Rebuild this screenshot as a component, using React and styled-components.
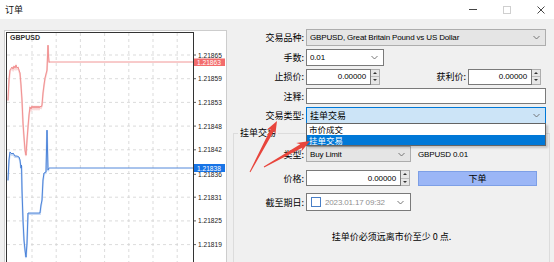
import React from 'react'
import styled, { createGlobalStyle } from 'styled-components'

const GlobalStyle = createGlobalStyle`
  html, body { margin: 0; padding: 0; background: #f0f0f0; }
  body { font-family: "Liberation Sans", "Noto Sans CJK SC", sans-serif; }
  * { box-sizing: border-box; }
`

const cjk = `"Noto Sans CJK SC", "Liberation Sans", sans-serif`

const Window = styled.div`
  position: relative;
  width: 554px;
  height: 262px;
  overflow: hidden;
  background: #f0f0f0;
  display: flex;
  flex-direction: column;
`

const TitleBar = styled.div`
  height: 19px;
  flex-shrink: 0;
  background: #fff;
  display: flex;
  align-items: center;
  padding-left: 5px;
`

const Title = styled.span`
  flex: 1;
  font-family: ${cjk};
  font-size: 9px;
  color: #111;
`

const Caption = styled.div`
  display: flex;
  height: 100%;
  margin-right: -4px;
`

const CaptionButton = styled.div`
  width: 34px;
  display: flex;
  align-items: center;
  justify-content: center;
`

const MinGlyph = styled.span`
  width: 8px;
  height: 1px;
  background: #444;
`

const MaxGlyph = styled.span`
  width: 8px;
  height: 8px;
  border: 1px solid #cfcfcf;
`

const Body = styled.div`
  flex: 1;
  display: flex;
  align-items: flex-start;
`

const ChartFrame = styled.div`
  margin: 11px 0 0 4px;
  width: 223px;
  height: 232px;
  flex-shrink: 0;
  svg { display: block; }
`

const Form = styled.div`
  margin-left: 6px;
  width: 317px;
  display: flex;
  flex-direction: column;
  padding-top: 10px;
`

const TopGrid = styled.div`
  display: grid;
  grid-template-columns: 73px 240px;
  grid-auto-rows: 17px;
  row-gap: 2.5px;
  align-items: center;
`

const Label = styled.div`
  text-align: right;
  padding-right: 2px;
  font-family: ${cjk};
  font-size: 9px;
  color: #000;
  white-space: nowrap;
`

const Field = styled.div`
  display: flex;
  align-items: center;
  height: 100%;
`

const comboColors = {
  disabled: { bg: '#e5e5e5', border: '#adadad' },
  plain: { bg: '#ffffff', border: '#7a7a7a' },
  focus: { bg: '#cce4f7', border: '#0078d7' },
}

const Combo = styled.div`
  position: relative;
  width: ${(p) => p.$w}px;
  height: ${(p) => p.$h || 17}px;
  display: flex;
  align-items: center;
  padding: 0 5px 0 3px;
  background: ${(p) => comboColors[p.$variant].bg};
  border: 1px solid ${(p) => comboColors[p.$variant].border};
  font-size: ${(p) => (p.$cjk ? 9 : 8)}px;
  font-family: ${(p) => (p.$cjk ? cjk : `"Liberation Sans", sans-serif`)};
  letter-spacing: ${(p) => (p.$cjk ? 0 : -0.15)}px;
  color: #000;
  white-space: nowrap;
`

const ComboText = styled.span`
  flex: 1;
  overflow: hidden;
`

const Chevron = () => (
  <svg width="7" height="5" viewBox="0 0 7 5">
    <polyline points="0.5,1 3.5,4 6.5,1" fill="none" stroke="#6a6a6a" strokeWidth="0.9" />
  </svg>
)

const DropList = styled.div`
  position: absolute;
  top: 100%;
  left: -1px;
  right: -1px;
  z-index: 2;
  background: #fff;
  border: 1px solid #646464;
  box-shadow: 2px 2px 2px rgba(0, 0, 0, 0.18);
`

const DropItem = styled.div`
  height: 10.5px;
  line-height: 10.5px;
  padding-left: 2px;
  font-family: ${cjk};
  font-size: 8.5px;
  background: ${(p) => (p.$active ? '#0078d7' : '#fff')};
  color: ${(p) => (p.$active ? '#fff' : '#000')};
`

const SpinWrap = styled.div`
  display: flex;
  width: ${(p) => p.$w}px;
  height: 16px;
`

const InputBox = styled.div`
  flex: 1;
  height: 100%;
  background: #fff;
  border: 1px solid #7a7a7a;
  display: flex;
  align-items: center;
  justify-content: flex-end;
  padding-right: 4px;
  font-size: 8px;
  letter-spacing: -0.1px;
  color: #000;
`

const Spinner = styled.div`
  width: 9px;
  display: flex;
  flex-direction: column;
  border: 1px solid #adadad;
  border-left: none;
  background: #e6e6e6;
`

const SpinHalf = styled.div`
  flex: 1;
  display: flex;
  align-items: center;
  justify-content: center;
  & + & { border-top: 1px solid #bdbdbd; }
  &::after {
    content: '';
    border-left: 2px solid transparent;
    border-right: 2px solid transparent;
    ${(p) => (p.$up ? 'border-bottom: 2px solid #333;' : 'border-top: 2px solid #333;')}
  }
`

const SpinInput = ({ w, value }) => (
  <SpinWrap $w={w}>
    <InputBox>{value}</InputBox>
    <Spinner>
      <SpinHalf $up />
      <SpinHalf />
    </Spinner>
  </SpinWrap>
)

const InlineLabel = styled(Label)`
  flex: 1;
`

const Filler = styled.span`
  width: 5px;
`

const TextBox = styled.div`
  width: 240px;
  height: 16px;
  background: #fff;
  border: 1px solid #7a7a7a;
`

const Group = styled.fieldset`
  margin: 3px 0 0 0;
  padding: 6px 0 0 0;
  border: 1px solid #dcdcdc;
  min-width: 0;
  min-height: 150px;
`

const Legend = styled.legend`
  margin-left: 4px;
  padding: 0 2px;
  font-family: ${cjk};
  font-size: 9px;
  line-height: 12px;
  color: #000;
`

const GroupGrid = styled.div`
  display: grid;
  grid-template-columns: 72px auto;
  grid-auto-rows: 18px;
  row-gap: 6px;
  align-items: center;
`

const Note = styled.span`
  margin-left: 7px;
  font-size: 8px;
  letter-spacing: -0.15px;
  color: #000;
`

const OrderButton = styled.div`
  margin-left: 8px;
  width: 119px;
  height: 15px;
  display: flex;
  align-items: center;
  justify-content: center;
  background: #9bb6f6;
  border: 1px solid #7d9fe6;
  font-family: ${cjk};
  font-size: 9px;
  color: #000;
`

const DateBox = styled.div`
  width: 105px;
  height: 18px;
  display: flex;
  align-items: center;
  padding: 0 6px 0 4px;
  background: #fff;
  border: 1px solid #7a7a7a;
`

const Check = styled.span`
  width: 10px;
  height: 10px;
  flex-shrink: 0;
  border: 1px solid #4a7fc6;
  background: #fff;
`

const DateText = styled.span`
  width: 64px;
  margin: 0 auto 0 4px;
  overflow: hidden;
  white-space: nowrap;
  font-size: 8px;
  letter-spacing: -0.15px;
  color: #8f8f8f;
`

const Message = styled.div`
  margin-top: 20px;
  text-align: center;
  font-family: ${cjk};
  font-size: 9px;
  line-height: 12px;
  color: #000;
`

const Annotations = styled.svg`
  position: absolute;
  left: 0;
  top: 0;
  pointer-events: none;
  z-index: 3;
`

const levels = ['1.21865', '1.21859', '1.21853', '1.21848', '1.21842', '1.21836', '1.21831', '1.21825', '1.21819']

const redPath = [
  [8, 100], [9, 80], [10, 70], [12, 67], [13, 69], [14, 66], [15, 68], [16, 65], [17, 68], [18, 67],
  [20, 73], [21, 85], [22, 100], [23, 123], [24, 137], [25, 150], [26, 155], [27, 140], [28, 127],
  [29, 115], [30, 107], [31, 109], [32, 106], [33, 108], [34, 106], [35, 108], [36, 106], [37, 108],
  [38, 106], [39, 108], [40, 106], [41, 107], [42, 105], [43, 93], [44, 85], [45, 78], [46, 74],
  [47, 70], [48, 45], [48.5, 56], [49, 62], [193, 62],
]

const bluePath = [
  [8, 180], [9, 160], [10, 152], [12, 154], [13, 153], [15, 156], [17, 156], [19, 157], [20, 160],
  [21, 168], [21.5, 165], [22, 190], [23, 220], [24, 240], [25, 250], [26, 257], [27, 243],
  [28, 213], [40, 213], [41, 205], [42, 200], [42.5, 190], [43, 180], [44, 173], [46, 172],
  [47, 130], [48, 170], [49, 168], [193, 168],
]

const pts = (arr, dy = 0) => arr.map(([x, y]) => `${x},${y + dy}`).join(' ')

const Chart = () => (
  <svg width="223" height="232" viewBox="4 30 223 232">
    <rect x="4.5" y="30.5" width="222" height="240" fill="#fff" stroke="#cdcdcd" />
    {levels.map((_, i) => (
      <line key={`h${i}`} x1="7" x2="193" y1={55 + i * 23.7} y2={55 + i * 23.7} stroke="#d2d2d2" strokeWidth="0.8" strokeDasharray="3 3" />
    ))}
    {[0, 1, 2, 3, 4, 5, 6].map((i) => (
      <line key={`v${i}`} x1={32 + i * 24.2} x2={32 + i * 24.2} y1="33" y2="262" stroke="#d2d2d2" strokeWidth="0.8" strokeDasharray="3 3" />
    ))}
    <polyline points={pts(redPath.slice(0, -1), 1)} fill="none" stroke="#f9d3d3" strokeWidth="1.8" />
    <polyline points={pts(redPath)} fill="none" stroke="#ef8a8a" strokeWidth="0.9" />
    <polyline points={pts(bluePath.slice(0, -1), 1)} fill="none" stroke="#c6d9f5" strokeWidth="1.8" />
    <polyline points={pts(bluePath)} fill="none" stroke="#3f7ad6" strokeWidth="0.9" />
    <rect x="6.5" y="32.5" width="187" height="240" fill="none" stroke="#333" />
    <text x="10" y="37.5" fontSize="7" fontWeight="bold" fill="#333" dominantBaseline="central" fontFamily="Liberation Sans, sans-serif">GBPUSD</text>
    {levels.map((t, i) => {
      const y = 55 + i * 23.7 + (i === 5 ? 0.8 : 0)
      return (
        <g key={t}>
          <line x1="193" x2="196" y1={y} y2={y} stroke="#333" strokeWidth="0.8" />
          <text x="198" y={y} fontSize="6.6" fill="#222" dominantBaseline="central" fontFamily="Liberation Sans, sans-serif">{t}</text>
        </g>
      )
    })}
    <rect x="194" y="58.5" width="31" height="7.5" fill="#f36c6c" />
    <text x="197" y="62.3" fontSize="6.6" fill="#fff" dominantBaseline="central" fontFamily="Liberation Sans, sans-serif">1.21863</text>
    <rect x="194" y="164" width="31" height="8" fill="#1874e6" />
    <text x="197" y="168" fontSize="6.6" fill="#fff" dominantBaseline="central" fontFamily="Liberation Sans, sans-serif">1.21838</text>
  </svg>
)

function arrowPoints(tx, ty, px, py) {
  const dx = px - tx
  const dy = py - ty
  const len = Math.hypot(dx, dy)
  const ux = dx / len
  const uy = dy / len
  const nx = -uy
  const ny = ux
  const head = 13
  const wing = 5
  const shaft = 2
  const tail = 0.5
  const bx = px - ux * head
  const by = py - uy * head
  const cx = px - ux * (head - 3)
  const cy = py - uy * (head - 3)
  return [
    [tx + nx * tail, ty + ny * tail],
    [cx + nx * shaft, cy + ny * shaft],
    [bx + nx * wing, by + ny * wing],
    [px, py],
    [bx - nx * wing, by - ny * wing],
    [cx - nx * shaft, cy - ny * shaft],
    [tx - nx * tail, ty - ny * tail],
  ]
    .map(([x, y]) => `${x.toFixed(1)},${y.toFixed(1)}`)
    .join(' ')
}

export default function App() {
  return (
    <>
      <GlobalStyle />
      <Window>
        <TitleBar>
          <Title>订单</Title>
          <Caption>
            <CaptionButton><MinGlyph /></CaptionButton>
            <CaptionButton><MaxGlyph /></CaptionButton>
            <CaptionButton>
              <svg width="8" height="8" viewBox="0 0 8 8">
                <path d="M0.5 0.5 L7.5 7.5 M7.5 0.5 L0.5 7.5" stroke="#333" strokeWidth="0.9" />
              </svg>
            </CaptionButton>
          </Caption>
        </TitleBar>
        <Body>
          <ChartFrame>
            <Chart />
          </ChartFrame>
          <Form>
            <TopGrid>
              <Label>交易品种:</Label>
              <Field>
                <Combo $w={240} $variant="disabled">
                  <ComboText>GBPUSD, Great Britain Pound vs US Dollar</ComboText>
                  <Chevron />
                </Combo>
              </Field>
              <Label>手数:</Label>
              <Field>
                <Combo $w={78} $variant="plain">
                  <ComboText>0.01</ComboText>
                  <Chevron />
                </Combo>
              </Field>
              <Label>止损价:</Label>
              <Field>
                <SpinInput w={74} value="0.00000" />
                <InlineLabel>获利价:</InlineLabel>
                <SpinInput w={73} value="0.00000" />
                <Filler />
              </Field>
              <Label>注释:</Label>
              <Field>
                <TextBox />
              </Field>
              <Label>交易类型:</Label>
              <Field>
                <Combo $w={240} $variant="focus" $cjk>
                  <ComboText>挂单交易</ComboText>
                  <Chevron />
                  <DropList>
                    <DropItem>市价成交</DropItem>
                    <DropItem $active>挂单交易</DropItem>
                  </DropList>
                </Combo>
              </Field>
            </TopGrid>
            <Group>
              <Legend>挂单交易</Legend>
              <GroupGrid>
                <Label>类型:</Label>
                <Field>
                  <Combo $w={105} $h={16} $variant="disabled">
                    <ComboText>Buy Limit</ComboText>
                    <Chevron />
                  </Combo>
                  <Note>GBPUSD 0.01</Note>
                </Field>
                <Label>价格:</Label>
                <Field>
                  <SpinInput w={104} value="0.00000" />
                  <OrderButton>下单</OrderButton>
                </Field>
                <Label>截至期日:</Label>
                <Field>
                  <DateBox>
                    <Check />
                    <DateText>2023.01.17 09:32</DateText>
                    <Chevron />
                  </DateBox>
                </Field>
              </GroupGrid>
              <Message>挂单价必须远离市价至少 0 点.</Message>
            </Group>
          </Form>
        </Body>
        <Annotations width="554" height="262" viewBox="0 0 554 262">
          <polygon points={arrowPoints(250, 172, 277, 121)} fill="#e8453c" />
          <polygon points={arrowPoints(264, 167, 310, 141)} fill="#e8453c" />
        </Annotations>
      </Window>
    </>
  )
}
